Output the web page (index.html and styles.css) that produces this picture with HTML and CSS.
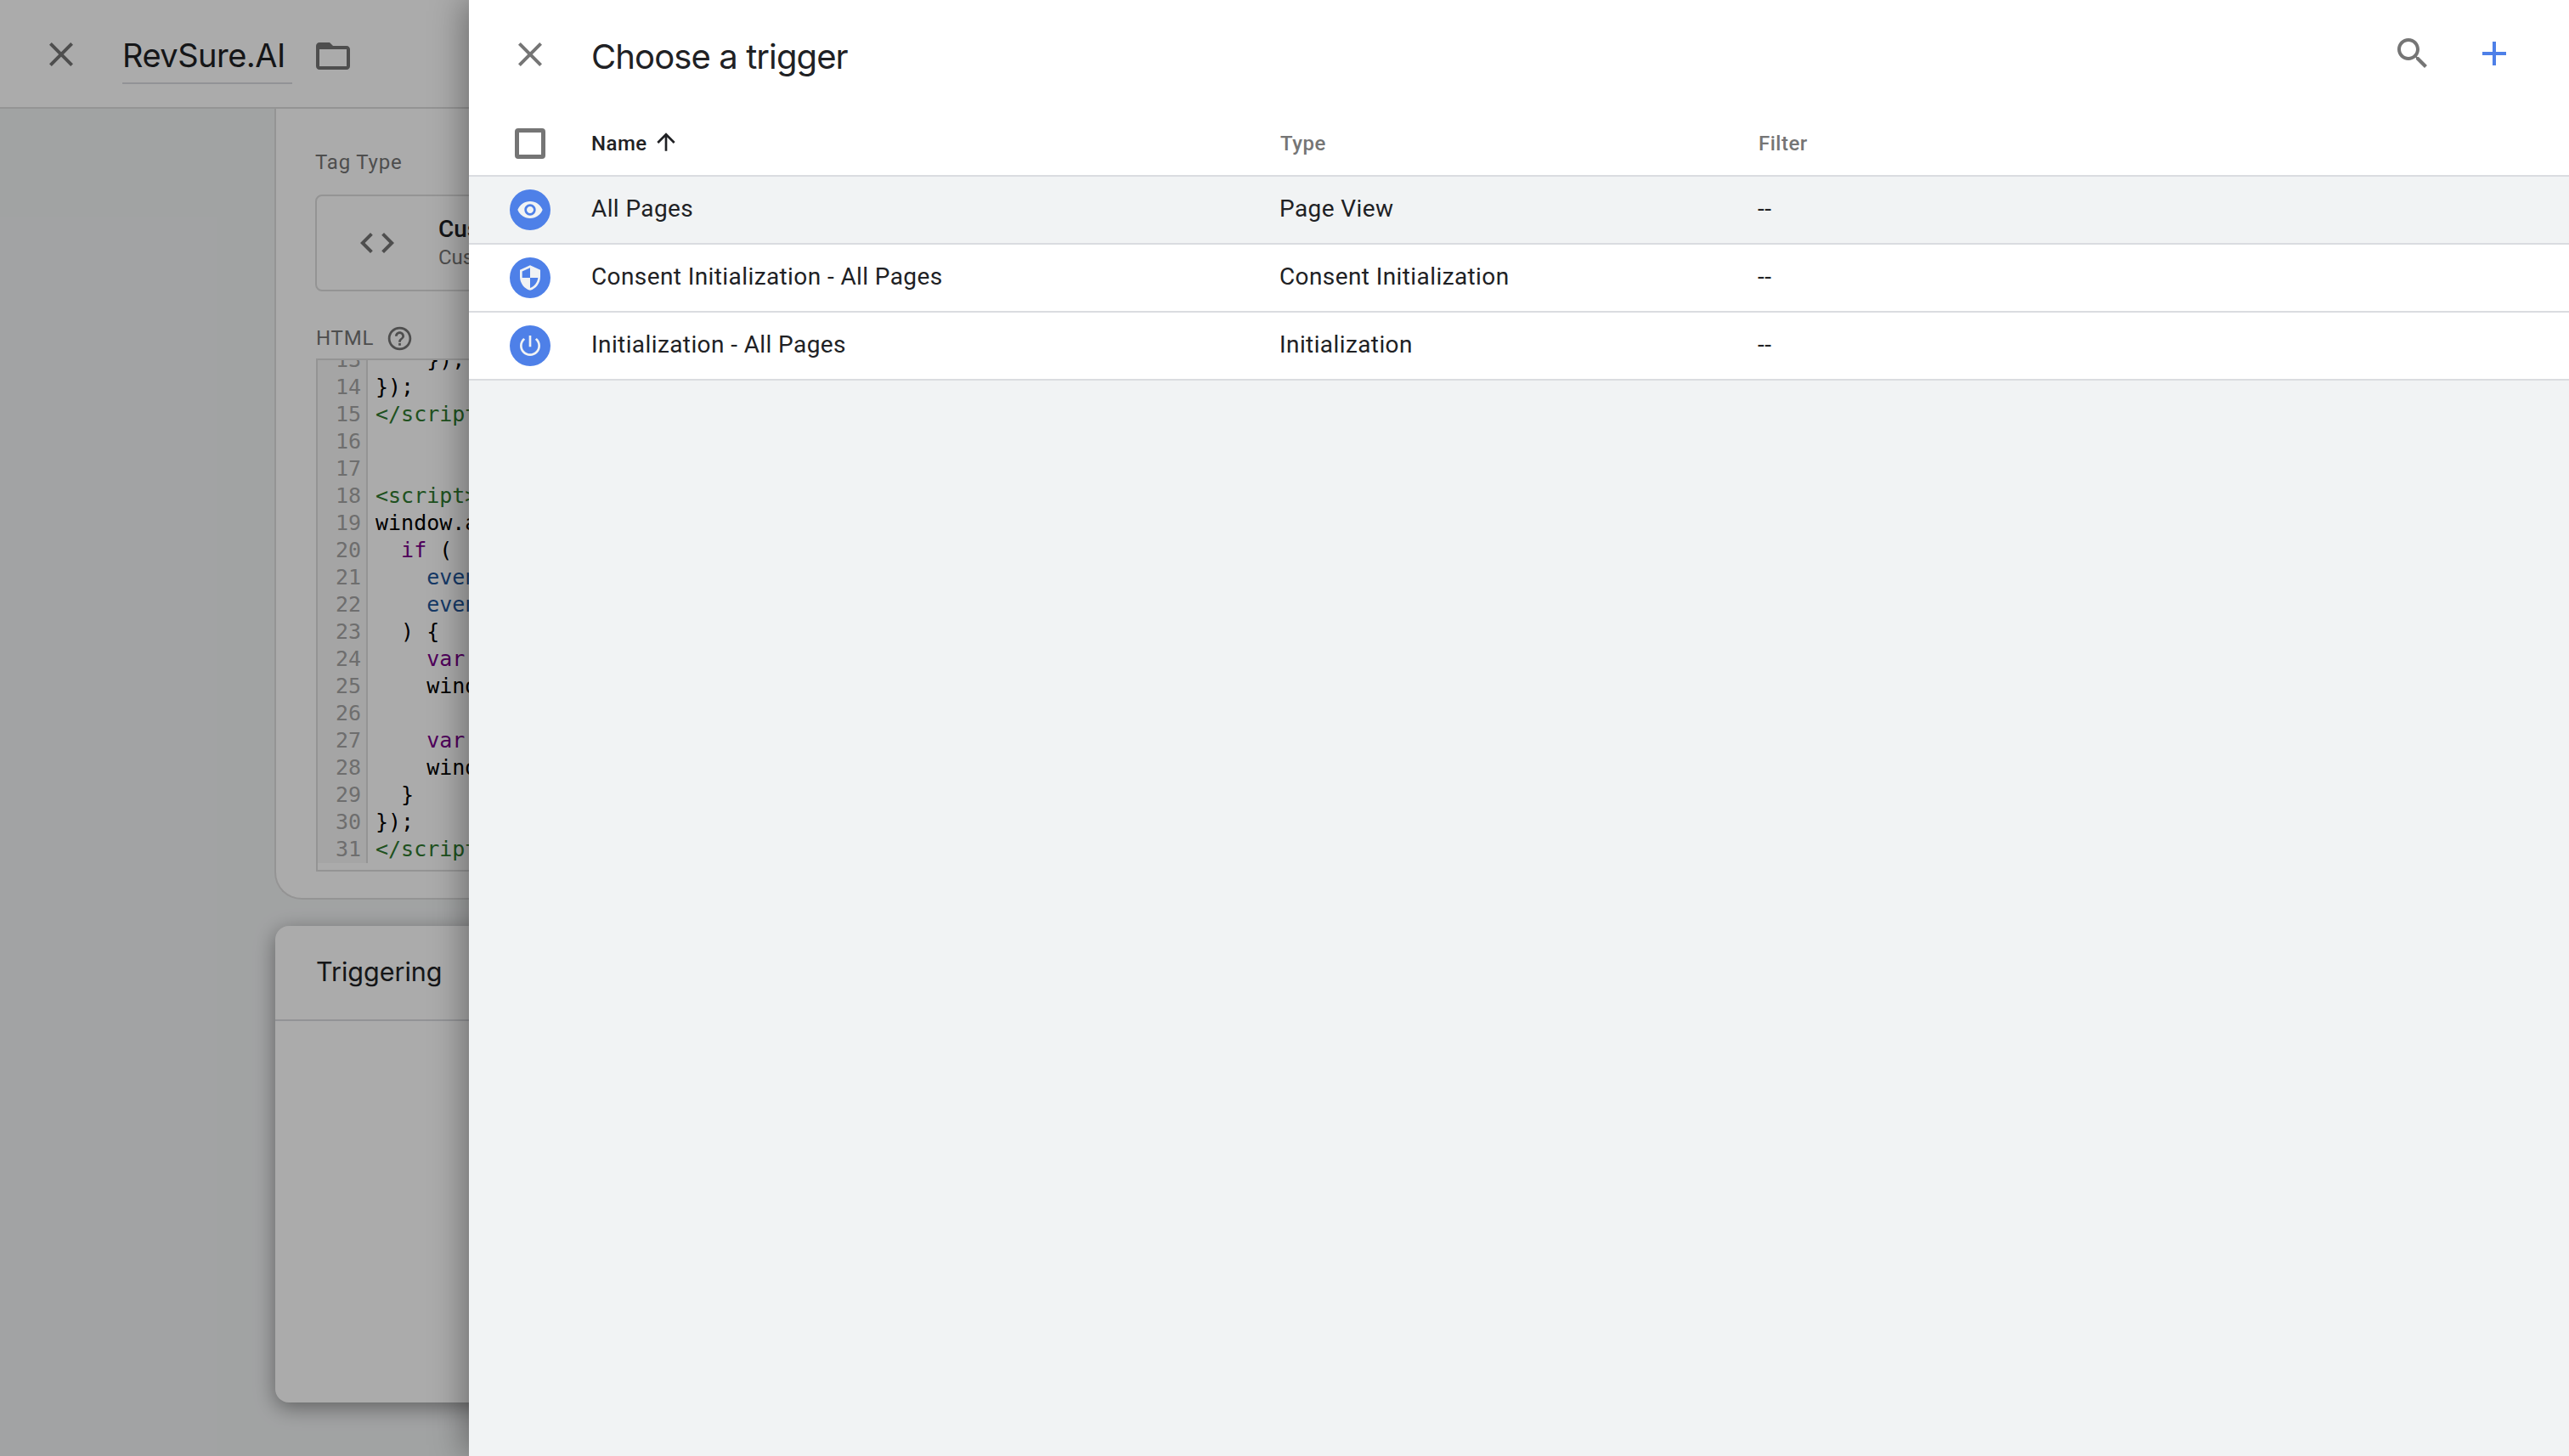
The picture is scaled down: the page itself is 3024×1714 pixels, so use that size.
FILE: index.html
```html
<!DOCTYPE html>
<html lang="en">
<head>
  <meta charset="UTF-8" />
  <title>Choose a trigger</title>
  <link rel="stylesheet" href="styles.css">
</head>

<body>
  <!-- Tag editor behind the panel -->
  <div class="page">
    <header class="topbar">
      <svg class="icon close-icon" viewBox="0 0 24 24"><path d="M19 6.41L17.59 5 12 10.59 6.41 5 5 6.41 10.59 12 5 17.59 6.41 19 12 13.41 17.59 19 19 17.59 13.41 12z"/></svg>
      <div class="tag-name">RevSure.AI</div>
      <svg class="icon folder-icon" viewBox="0 0 24 24"><path d="M20 6h-8l-2-2H4c-1.1 0-1.99.9-1.99 2L2 18c0 1.1.9 2 2 2h16c1.1 0 2-.9 2-2V8c0-1.1-.9-2-2-2zm0 12H4V8h16v10z"/></svg>
    </header>

    <main class="editor">
      <section class="config-card">
        <div class="field-label">Tag Type</div>
        <div class="type-box">
          <svg class="icon code-icon" viewBox="0 0 24 24"><path d="M9.4 16.6L4.8 12l4.6-4.6L8 6l-6 6 6 6 1.4-1.4zm5.2 0l4.6-4.6-4.6-4.6L16 6l6 6-6 6-1.4-1.4z"/></svg>
          <div>
            <div class="type-name">Custom HTML</div>
            <div class="type-sub">Custom HTML Tag</div>
          </div>
        </div>
        <div class="html-label">
          <span class="field-label">HTML</span>
          <svg class="icon help-icon" viewBox="0 0 24 24"><path d="M11 18h2v-2h-2v2zm1-16C6.48 2 2 6.48 2 12s4.48 10 10 10 10-4.48 10-10S17.52 2 12 2zm0 18c-4.41 0-8-3.59-8-8s3.59-8 8-8 8 3.59 8 8-3.59 8-8 8zm0-14c-2.21 0-4 1.79-4 4h2c0-1.1.9-2 2-2s2 .9 2 2c0 2-3 1.75-3 5h2c0-2.25 3-2.5 3-5 0-2.21-1.79-4-4-4z"/></svg>
        </div>
        <div class="code-box">
          <div class="code-scroll">
            <pre class="gutter">13
14
15
16
17
18
19
20
21
22
23
24
25
26
27
28
29
30
31</pre>
            <pre class="code">    }),
});
<span class="c-tag">&lt;/script&gt;</span>


<span class="c-tag">&lt;script&gt;</span>
window.addEventListener
  <span class="c-key">if</span> (
    <span class="c-var">event</span>
    <span class="c-var">event</span>
  ) {
    <span class="c-key">var</span>
    window

    <span class="c-key">var</span>
    window
  }
});
<span class="c-tag">&lt;/script&gt;</span></pre>
          </div>
        </div>
      </section>

      <section class="trigger-card">
        <h2 class="trigger-title">Triggering</h2>
      </section>
    </main>
  </div>

  <div class="scrim"></div>

  <!-- Trigger picker -->
  <aside class="panel">
    <div class="panel-head">
      <svg class="icon panel-close" viewBox="0 0 24 24"><path d="M19 6.41L17.59 5 12 10.59 6.41 5 5 6.41 10.59 12 5 17.59 6.41 19 12 13.41 17.59 19 19 17.59 13.41 12z"/></svg>
      <h1 class="panel-title">Choose a trigger</h1>
      <div class="panel-actions">
        <svg class="icon" viewBox="0 0 24 24"><path d="M15.5 14h-.79l-.28-.27C15.41 12.59 16 11.11 16 9.5 16 5.91 13.09 3 9.5 3S3 5.91 3 9.5 5.91 16 9.5 16c1.61 0 3.09-.59 4.23-1.57l.27.28v.79l5 4.99L20.49 19l-4.99-5zm-6 0C7.01 14 5 11.99 5 9.5S7.01 5 9.5 5 14 7.01 14 9.5 11.99 14 9.5 14z"/></svg>
        <svg class="icon add-icon" viewBox="0 0 24 24"><path d="M19 13h-6v6h-2v-6H5v-2h6V5h2v6h6v2z"/></svg>
      </div>
    </div>

    <div class="row head-row">
      <div class="cell-icon"><span class="checkbox"></span></div>
      <div class="head-name">Name
        <svg class="sort-icon" viewBox="0 0 24 24"><path d="M4 12l1.41 1.41L11 7.83V20h2V7.83l5.58 5.59L20 12l-8-8-8 8z"/></svg>
      </div>
      <div>Type</div>
      <div>Filter</div>
    </div>

    <div class="row trigger-row selected">
      <div class="cell-icon">
        <span class="badge"><svg viewBox="0 0 24 24"><path d="M12 4.5C7 4.5 2.73 7.61 1 12c1.73 4.39 6 7.5 11 7.5s9.27-3.11 11-7.5c-1.73-4.39-6-7.5-11-7.5zM12 17c-2.76 0-5-2.24-5-5s2.24-5 5-5 5 2.24 5 5-2.24 5-5 5zm0-8c-1.66 0-3 1.34-3 3s1.34 3 3 3 3-1.34 3-3-1.34-3-3-3z"/></svg></span>
      </div>
      <div>All Pages</div>
      <div>Page View</div>
      <div class="dashes">--</div>
    </div>
    <div class="row trigger-row">
      <div class="cell-icon">
        <span class="badge"><svg viewBox="0 0 24 24"><path d="M12 1L3 5v6c0 5.55 3.84 10.74 9 12 5.16-1.26 9-6.45 9-12V5l-9-4zm0 10.99h7c-.53 4.12-3.28 7.79-7 8.94V12H5V6.3l7-3.11v8.8z"/></svg></span>
      </div>
      <div>Consent Initialization - All Pages</div>
      <div>Consent Initialization</div>
      <div class="dashes">--</div>
    </div>
    <div class="row trigger-row">
      <div class="cell-icon">
        <span class="badge"><svg viewBox="0 0 24 24"><path d="M13 3h-2v10h2V3zm4.83 2.17l-1.42 1.42C17.99 7.86 19 9.81 19 12c0 3.87-3.13 7-7 7s-7-3.13-7-7c0-2.19 1.01-4.14 2.58-5.42L6.17 5.17C4.23 6.82 3 9.26 3 12c0 4.97 4.03 9 9 9s9-4.03 9-9c0-2.74-1.23-5.18-3.17-6.83z"/></svg></span>
      </div>
      <div>Initialization - All Pages</div>
      <div>Initialization</div>
      <div class="dashes">--</div>
    </div>
  </aside>
</body>
</html>
```

FILE: styles.css
```css
* {
  box-sizing: border-box;
}

body {
  margin: 0;
  height: 1714px;
  overflow: hidden;
  position: relative;
  font-family: Roboto, sans-serif;
  background: #f1f3f4;
  color: #202124;
}

.icon {
  display: block;
  width: 48px;
  height: 48px;
  fill: #757575;
  flex: none;
}

/* Page behind the panel */
.page {
  height: 100%;
  display: flex;
  flex-direction: column;
}

.topbar {
  height: 128px;
  flex: none;
  display: flex;
  align-items: flex-start;
  background: #fff;
  border-bottom: 2px solid #ddd;
  padding: 40px 0 0 48px;
}

.tag-name {
  width: 200px;
  height: 59px;
  margin-left: 48px;
  font-family: Inter, sans-serif;
  font-size: 38px;
  line-height: 50px;
  letter-spacing: -0.5px;
  color: #202124;
  border-bottom: 2px solid #dadce0;
}

.folder-icon {
  margin: 2px 0 0 24px;
}

.editor {
  flex: 1;
  padding-left: 323px;
  background: #f1f3f4;
}

.config-card {
  height: 931px;
  width: 2000px;
  background: #fff;
  border-left: 2px solid #ddd;
  border-bottom: 2px solid #ddd;
  border-bottom-left-radius: 32px;
  padding: 47px 0 0 46px;
}

.field-label {
  font-size: 24px;
  line-height: 32px;
  letter-spacing: 0.8px;
  color: #757575;
}

.type-box {
  width: 1000px;
  height: 114px;
  margin-top: 22px;
  display: flex;
  align-items: center;
  border: 2px solid #ddd;
  border-radius: 8px;
  gap: 48px;
  padding-left: 47px;
}

.type-name {
  font-size: 28px;
  font-weight: 500;
  line-height: 34px;
  color: #202124;
}

.type-sub {
  font-size: 24px;
  line-height: 32px;
  color: #757575;
}

.html-label {
  display: flex;
  align-items: center;
  gap: 14px;
  margin-top: 39px;
  padding-left: 1px;
  height: 32px;
}

.help-icon {
  width: 33px;
  height: 33px;
}

.code-box {
  width: 1500px;
  height: 604px;
  margin: 8px 0 0 1px;
  border: 2px solid #ddd;
  overflow: hidden;
}

.code-scroll {
  display: flex;
  margin-top: -16px;
}

pre {
  margin: 0;
  font-family: "DejaVu Sans Mono", monospace;
  font-size: 25px;
  line-height: 32px;
}

.gutter {
  width: 59px;
  flex: none;
  padding-right: 6px;
  text-align: right;
  background: #f7f7f7;
  border-right: 2px solid #ddd;
  color: #a4a4a4;
}

.code {
  padding-left: 9px;
  color: #000;
}

.c-tag { color: #2f7a2f; }
.c-key { color: #770088; }
.c-var { color: #225599; }

.trigger-card {
  width: 2000px;
  height: 561px;
  margin: 31px 0 0 1px;
  background: #fff;
  border-radius: 16px;
  box-shadow: 0 6px 24px rgba(0, 0, 0, 0.4);
}

.trigger-title {
  margin: 0;
  height: 112px;
  padding: 34px 0 0 48px;
  font-family: Inter, sans-serif;
  font-weight: 400;
  font-size: 30.5px;
  line-height: 40px;
  color: #202124;
  border-bottom: 2px solid #dadce0;
}

.scrim {
  position: absolute;
  inset: 0;
  background: rgba(0, 0, 0, 0.33);
}

/* Trigger picker */
.panel {
  position: absolute;
  top: 0;
  right: 0;
  bottom: 0;
  left: 552px;
  background: #f1f3f4;
  box-shadow: -6px 0 36px rgba(0, 0, 0, 0.35);
}

.panel-head {
  height: 128px;
  background: #fff;
  display: flex;
  align-items: flex-start;
  padding: 39px 64px 0 48px;
}

.panel-close {
  margin-top: 1px;
}

.panel-title {
  margin: 0 0 0 48px;
  flex: 1;
  font-family: Inter, sans-serif;
  font-weight: 400;
  font-size: 40px;
  line-height: 56px;
  letter-spacing: -0.9px;
  color: #202124;
}

.panel-actions {
  display: flex;
  gap: 48px;
}

.add-icon {
  fill: #4e80e8;
}

.row {
  display: grid;
  grid-template-columns: 145px 810px 563px 1fr;
  align-items: center;
  border-bottom: 2px solid #dadce0;
}

.head-row {
  height: 80px;
  padding-top: 3px;
  background: #fff;
  font-size: 24px;
  font-weight: 500;
  letter-spacing: 0.5px;
  color: #757575;
}

.head-name {
  display: flex;
  align-items: center;
  gap: 6px;
  margin-left: -1px;
  color: #202124;
}

.sort-icon {
  width: 32px;
  height: 32px;
  margin-top: -3px;
  fill: #202124;
}

.cell-icon {
  display: flex;
  justify-content: center;
  padding-right: 1px;
}

.checkbox {
  width: 36px;
  height: 36px;
  border: 5px solid #757575;
  border-radius: 4px;
}

.trigger-row {
  height: 80px;
  background: #fff;
  font-size: 28px;
  letter-spacing: 0.4px;
  color: #202124;
}

.trigger-row div:not(.cell-icon) {
  padding-bottom: 3px;
  margin-left: -1px;
}

.trigger-row.selected {
  background: #f1f3f4;
}

.badge {
  width: 48px;
  height: 48px;
  border-radius: 50%;
  background: #4e80e8;
  display: flex;
  align-items: center;
  justify-content: center;
}

.badge svg {
  width: 32px;
  height: 32px;
  fill: #f1f3f4;
}
```
